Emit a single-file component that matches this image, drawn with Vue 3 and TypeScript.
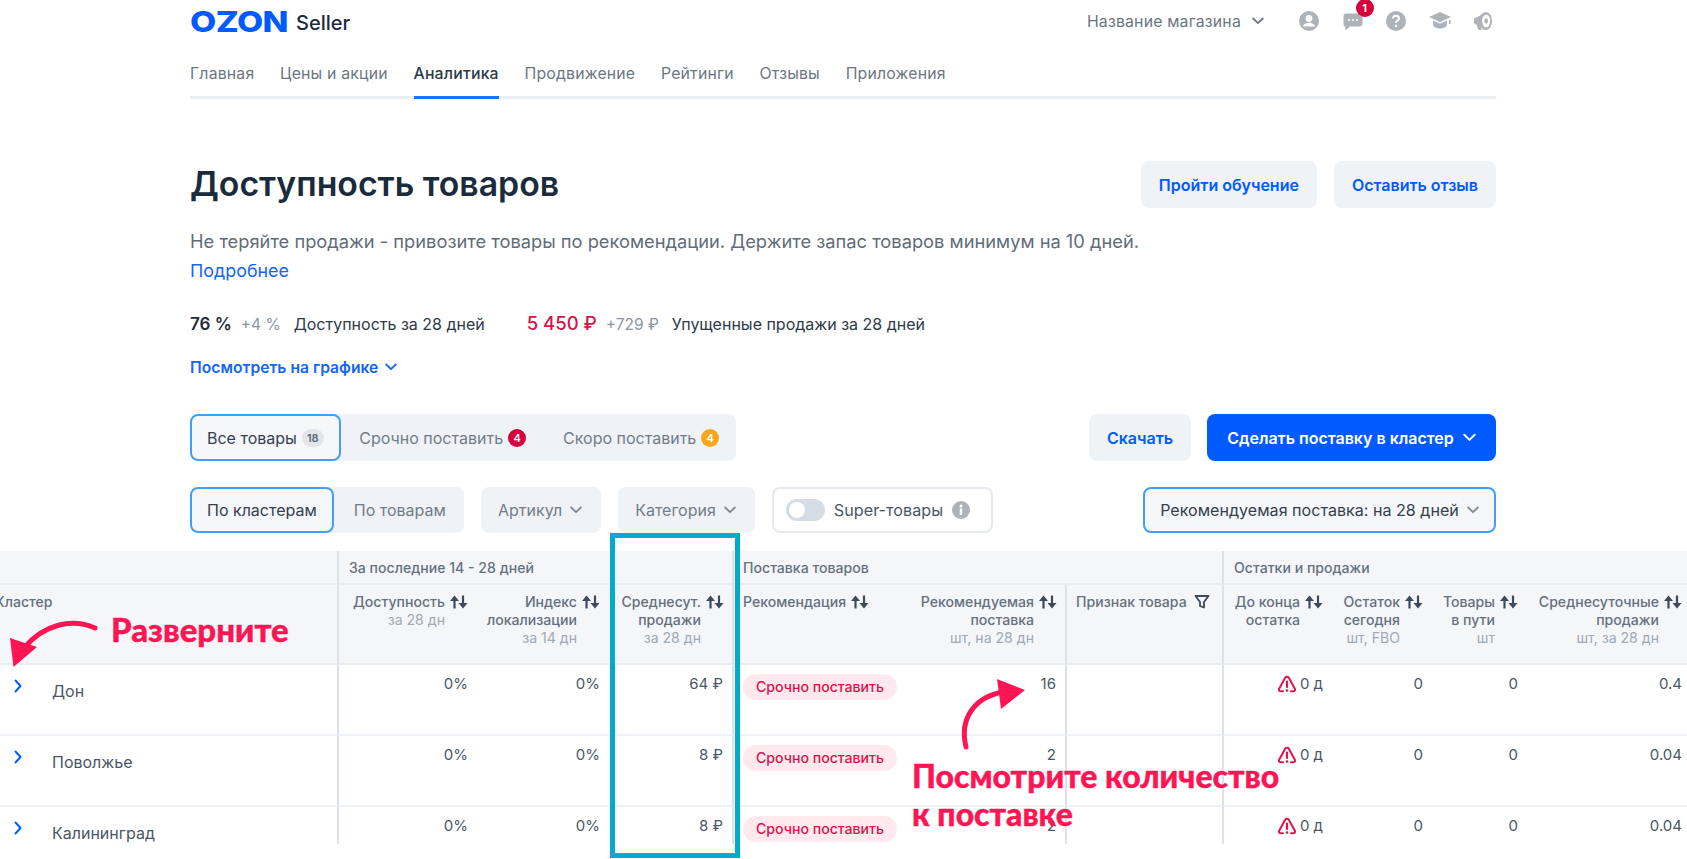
<script setup lang="ts">
interface HeadCell { lines: string[]; sub?: string; cls?: string; icon?: string }
interface Row { name: string; sales: string; rec: string; speed: string }

const nav: string[] = ['Главная', 'Цены и акции', 'Аналитика', 'Продвижение', 'Рейтинги', 'Отзывы', 'Приложения']

const heads: HeadCell[] = [
  { lines: ['Доступность'], sub: 'за 28 дн' },
  { lines: ['Индекс', 'локализации'], sub: 'за 14 дн' },
  { lines: ['Среднесут.', 'продажи'], sub: 'за 28 дн', cls: 'sep' },
  { lines: ['Рекомендация'], cls: 'left' },
  { lines: ['Рекомендуемая', 'поставка'], sub: 'шт, на 28 дн', cls: 'sep' },
  { lines: ['Признак товара'], cls: 'left sep', icon: 'filter' },
  { lines: ['До конца', 'остатка'] },
  { lines: ['Остаток', 'сегодня'], sub: 'шт, FBO' },
  { lines: ['Товары', 'в пути'], sub: 'шт' },
  { lines: ['Среднесуточные', 'продажи'], sub: 'шт, за 28 дн', cls: 'end' },
]

const rows: Row[] = [
  { name: 'Дон', sales: '64 ₽', rec: '16', speed: '0.4' },
  { name: 'Поволжье', sales: '8 ₽', rec: '2', speed: '0.04' },
  { name: 'Калининград', sales: '8 ₽', rec: '2', speed: '0.04' },
]
</script>

<template>
  <div class="page">
    <svg class="defs" width="0" height="0" aria-hidden="true">
      <symbol id="sort" viewBox="0 0 18 14">
        <path d="M4.500 13.500V4" fill="none" stroke="currentColor" stroke-width="2.200" />
        <path d="M4.500 .5 9 6H0z" fill="currentColor" />
        <path d="M13 .5V10" fill="none" stroke="currentColor" stroke-width="2.200" />
        <path d="M13 13.500 8.500 8h9z" fill="currentColor" />
      </symbol>
      <symbol id="chev" viewBox="0 0 12 8">
        <path d="M1.200 1.500 6 6.200l4.800-4.700" fill="none" stroke="currentColor" stroke-width="1.800" stroke-linecap="round" stroke-linejoin="round" />
      </symbol>
    </svg>

    <div class="container">
      <header class="top">
        <div class="brand">
          <span class="ozon-box"><span class="ozon">OZON</span></span>
          <span class="seller">Seller</span>
        </div>
        <div class="top-right">
          <span class="shop">Название магазина</span>
          <svg class="shop-chev"><use href="#chev" /></svg>
          <div class="top-icons">
            <svg class="ti" viewBox="0 0 20 20"><circle cx="10" cy="10" r="10" fill="#adb3b9" /><circle cx="10" cy="7.500" r="3.400" fill="#fff" /><path d="M3.800 15.500c1-2.600 3.400-3.800 6.200-3.800s5.200 1.200 6.200 3.800z" fill="#fff" /></svg>
            <div class="chat">
              <svg class="ti" viewBox="0 0 20 20"><path d="M3.500 2.500h13A3 3 0 0 1 19.500 5.500v7a3 3 0 0 1-3 3H7l-4.500 4v-4A2.500 2.500 0 0 1 .5 13V5.500a3 3 0 0 1 3-3z" fill="#adb3b9" /><circle cx="6" cy="9" r="1" fill="#fff" /><circle cx="10" cy="9" r="1" fill="#fff" /><circle cx="14" cy="9" r="1" fill="#fff" /></svg>
              <span class="bell">1</span>
            </div>
            <svg class="ti" viewBox="0 0 20 20"><circle cx="10" cy="10" r="10" fill="#adb3b9" /><path d="M7 7.600c0-1.700 1.300-2.800 3-2.800s3 1.100 3 2.600c0 2.200-3 2.300-3 4.300" fill="none" stroke="#fff" stroke-width="2" /><circle cx="10" cy="15" r="1.300" fill="#fff" /></svg>
            <svg class="ti cap" viewBox="0 0 22 18"><path d="M11 0 22 5l-11 5L0 5z" fill="#adb3b9" /><path d="M4 8.500v5c2 4 12 4 14 0v-5l-7 3.200z" fill="#adb3b9" /><rect x="20" y="8" width="1.600" height="4" fill="#adb3b9" /></svg>
            <svg class="ti" viewBox="0 0 20 22"><path d="M0 9.500 A2 2 0 0 1 2 7.500L11 3v16l-9-4.500A2 2 0 0 1 0 12.500z" fill="#adb3b9" /><path d="M3 15h4l1.500 6H5z" fill="#adb3b9" /><ellipse cx="13" cy="11" rx="7" ry="10" fill="#adb3b9" /><ellipse cx="13.500" cy="11" rx="4.500" ry="7" fill="#fff" /><ellipse cx="13.500" cy="11" rx="2" ry="3" fill="#adb3b9" /></svg>
          </div>
        </div>
      </header>

      <nav class="nav">
        <a v-for="item in nav" :key="item" :class="['nav-item', { active: item === 'Аналитика' }]">{{ item }}</a>
      </nav>

      <section class="title-row">
        <h1>Доступность товаров</h1>
        <div class="title-btns">
          <button class="btn light">Пройти обучение</button>
          <button class="btn light">Оставить отзыв</button>
        </div>
      </section>

      <p class="desc">Не теряйте продажи - привозите товары по рекомендации. Держите запас товаров минимум на 10 дней.</p>
      <a class="more">Подробнее</a>

      <div class="stats">
        <b class="st-main">76 %</b><span class="st-delta">+4 %</span><span class="st-label">Доступность за 28 дней</span>
        <b class="st-main red">5 450 ₽</b><span class="st-delta">+729 ₽</span><span class="st-label">Упущенные продажи за 28 дней</span>
      </div>

      <a class="chart-link">Посмотреть на графике <svg class="link-chev"><use href="#chev" /></svg></a>

      <div class="bar bar-1">
        <div class="seg">
          <span class="seg-item on">Все товары <i class="cnt grey">18</i></span>
          <span class="seg-item">Срочно поставить <i class="cnt redb">4</i></span>
          <span class="seg-item">Скоро поставить <i class="cnt orange">4</i></span>
        </div>
        <div class="bar-right">
          <button class="btn light dl">Скачать</button>
          <button class="btn primary">Сделать поставку в кластер <svg class="btn-chev"><use href="#chev" /></svg></button>
        </div>
      </div>

      <div class="bar bar-2">
        <div class="filters">
          <div class="seg small">
            <span class="seg-item on">По кластерам</span>
            <span class="seg-item">По товарам</span>
          </div>
          <span class="drop">Артикул <svg class="drop-chev"><use href="#chev" /></svg></span>
          <span class="drop">Категория <svg class="drop-chev"><use href="#chev" /></svg></span>
          <div class="super">
            <span class="toggle"><span class="knob"></span></span>
            <span>Super-товары</span>
            <svg class="info" viewBox="0 0 18 18"><circle cx="9" cy="9" r="9" fill="#adb3b9" /><rect x="7.800" y="7.500" width="2.400" height="6.500" fill="#fff" /><circle cx="9" cy="5" r="1.500" fill="#fff" /></svg>
          </div>
        </div>
        <span class="select">Рекомендуемая поставка: на 28 дней <svg class="drop-chev"><use href="#chev" /></svg></span>
      </div>
    </div>

    <div class="table">
      <div class="g g-first"></div>
      <div class="g g-a">За последние 14 - 28 дней</div>
      <div class="g g-b">Поставка товаров</div>
      <div class="g g-c">Остатки и продажи</div>

      <div class="h h-first"><span class="cluster">Кластер</span></div>
      <div v-for="head in heads" :key="head.lines[0]" :class="['h', head.cls]">
        <div class="h-text">
          <div v-for="line in head.lines" :key="line">{{ line }}</div>
          <div v-if="head.sub" class="sub">{{ head.sub }}</div>
        </div>
        <svg v-if="head.icon === 'filter'" class="filter" viewBox="0 0 16 16"><path d="M1.500 2h13L10 8v5.500L6 12V8z" fill="none" stroke="currentColor" stroke-width="1.800" stroke-linejoin="round" /></svg>
        <svg v-else class="sort"><use href="#sort" /></svg>
      </div>

      <template v-for="row in rows" :key="row.name">
        <div class="c c-first sep">
          <svg class="row-chev" viewBox="0 0 8 14"><path d="M1.500 1.500 6.500 7l-5 5.500" fill="none" stroke="#005bff" stroke-width="1.900" stroke-linecap="round" stroke-linejoin="round" /></svg>
          <span class="row-name">{{ row.name }}</span>
        </div>
        <div class="c">0%</div>
        <div class="c">0%</div>
        <div class="c sep">{{ row.sales }}</div>
        <div class="c left"><span class="pill">Срочно поставить</span></div>
        <div class="c sep">{{ row.rec }}</div>
        <div class="c sep"></div>
        <div class="c">
          <svg class="warn" viewBox="0 0 18 18"><path d="M5 16.300H3c-1.700 0-2.500-1.400-1.700-2.800L7.300 2.600c.8-1.300 2.600-1.300 3.400 0l6 10.900c.8 1.400 0 2.800-1.700 2.800h-2" fill="none" stroke="#e0134b" stroke-width="2" stroke-linecap="round" /><path d="M9 6.500v5.500" stroke="#e0134b" stroke-width="2.200" stroke-linecap="round" /><circle cx="9" cy="15.500" r="1.300" fill="#e0134b" /></svg>
          <span>0 д</span>
        </div>
        <div class="c">0</div>
        <div class="c">0</div>
        <div class="c end">{{ row.speed }}</div>
      </template>
    </div>

    <div class="frame"></div>
    <span class="note note-a">Разверните</span>
    <span class="note note-b">Посмотрите количество<br />к поставке</span>
    <svg class="arrows" width="1687" height="859" viewBox="0 0 1687 859">
      <path d="M95 628C72 618 44 624 24 648" fill="none" stroke="#ff1454" stroke-width="5" stroke-linecap="round" />
      <path d="M13.500 667 10 638 37 647z" fill="#ff1454" />
      <path d="M966 747C959 718 975 697 1003 692" fill="none" stroke="#ff1454" stroke-width="5" stroke-linecap="round" />
      <path d="M997 679 1025 690 1001 709z" fill="#ff1454" />
    </svg>
  </div>
</template>

<style>
html, body { margin: 0; background: #fff; overflow: hidden; }
</style>

<style scoped>
.page {
  position: relative;
  width: 1687px;
  height: 859px;
  overflow: hidden;
  background: #fff;
  color: #1f2d3d;
  font-family: Inter, "Liberation Sans", sans-serif;
  font-size: 14px;
}
.defs { position: absolute; }
.container { width: 1306px; margin-left: 190px; }
a { display: block; }

.top { display: flex; justify-content: space-between; align-items: center; height: 42px; }
.brand { display: flex; align-items: center; gap: 8px; }
.ozon-box { display: block; width: 98px; height: 30px; margin-top: 1px; }
.ozon {
  display: inline-block;
  color: #005bff;
  font-size: 29px;
  line-height: 30px;
  font-weight: 800;
  letter-spacing: -0.5px;
  transform: scaleX(1.17);
  transform-origin: left center;
}
.seller { margin-top: 4px; font-size: 20px; font-weight: 500; color: #1a2b40; }
.top-right { display: flex; align-items: center; }
.shop { font-size: 15.800px; color: #6b7683; letter-spacing: 0.2px; }
.shop-chev { width: 12px; height: 8px; margin-left: 11px; color: #6b7683; }
.top-icons { display: flex; align-items: center; gap: 23.500px; margin-left: 35px; margin-right: 3px; }
.ti { width: 20px; height: 20px; display: block; }
.ti.cap { width: 22px; height: 18px; margin: 0 -1px; }
.chat { position: relative; }
.bell {
  position: absolute;
  top: -12px;
  left: 13px;
  width: 18px;
  height: 18px;
  border-radius: 50%;
  background: #d6003c;
  color: #fff;
  font-size: 11px;
  font-weight: 700;
  line-height: 18px;
  text-align: center;
}

.nav { display: flex; gap: 25.700px; height: 54px; border-bottom: 3px solid #eaedf2; box-sizing: content-box; }
.nav-item { position: relative; padding-top: 22px; font-size: 15.800px; line-height: 20px; color: #6b7683; letter-spacing: 0.2px; }
.nav-item.active { color: #2b3a4a; font-weight: 500; }
.nav-item.active::after {
  content: "";
  position: absolute;
  left: 0;
  right: 0;
  bottom: -3px;
  height: 3px;
  background: #1f6fee;
}

.title-row { display: flex; justify-content: space-between; align-items: center; margin-top: 62px; height: 47px; }
h1 { margin: 0 0 2px; font-size: 33.800px; font-weight: 600; color: #1a2b3c; }
.title-btns { display: flex; gap: 17px; }
.btn {
  height: 47px;
  padding: 0 18px;
  border: 0;
  border-radius: 8px;
  font: 600 16px Inter, "Liberation Sans", sans-serif;
  display: flex;
  align-items: center;
  white-space: nowrap;
}
.btn.light { background: #eff2f6; color: #005bff; }
.btn.primary { width: 289px; justify-content: center; gap: 9px; background: #005bff; color: #fff; padding: 0; }
.btn-chev { width: 13px; height: 9px; color: #fff; }

.desc { margin: 21px 0 0; font-size: 18.300px; line-height: 24px; color: #5f6c7a; }
.more { margin-top: 6px; font-size: 17.900px; line-height: 24px; color: #1466f5; }

.stats { display: flex; align-items: baseline; margin-top: 29px; height: 24px; }
.st-main { font-size: 17px; font-weight: 600; color: #1f2d3d; }
.st-main.red { margin-left: 42px; font-size: 18.500px; font-weight: 500; color: #d8134a; }
.st-delta { margin-left: 9px; font-size: 15.500px; color: #8b95a1; }
.st-label { margin-left: 13px; font-size: 16px; color: #2d3a48; }

.chart-link { display: flex; align-items: center; gap: 7px; margin-top: 19px; height: 24px; font-size: 15.700px; font-weight: 600; color: #1466f5; }
.link-chev { width: 12px; height: 8px; color: #1466f5; }

.bar { display: flex; justify-content: space-between; align-items: flex-start; }
.bar-1 { margin-top: 35px; }
.bar-2 { margin-top: 26px; }
.bar-right { display: flex; gap: 16px; }
.dl { width: 102px; justify-content: center; padding: 0; }

.seg { display: flex; height: 47px; background: #eff2f6; border-radius: 8px; width: 546px; box-sizing: border-box; }
.seg.small { width: 274px; height: 46px; }
.seg-item { display: flex; align-items: center; gap: 5px; padding: 0 18.500px; font-size: 16px; color: #727d89; white-space: nowrap; box-sizing: border-box; }
.seg-item.on {
  width: 152px;
  padding: 0 15px;
  background: #f5f7fb;
  color: #34404d;
  border: 2px solid #41a0f5;
  border-radius: 8px;
}
.seg.small .seg-item.on { width: 144px; }
.seg.small .seg-item:not(.on) { padding: 0 20px; }
.cnt {
  display: inline-flex;
  align-items: center;
  justify-content: center;
  min-width: 18px;
  height: 18px;
  border-radius: 9px;
  font-size: 11px;
  font-style: normal;
  font-weight: 600;
  color: #fff;
}
.cnt.grey { min-width: 22px; background: #e2e6ec; color: #5d6875; }
.cnt.redb { background: #d6003c; }
.cnt.orange { background: #f5a81c; }

.filters { display: flex; align-items: flex-start; gap: 17px; }
.drop {
  display: flex;
  align-items: center;
  gap: 8px;
  height: 46px;
  padding: 0 19px 0 17px;
  background: #eff2f6;
  border-radius: 8px;
  font-size: 16px;
  color: #727d89;
}
.drop-chev { width: 12px; height: 8px; color: #7f8994; }
.super {
  display: flex;
  align-items: center;
  width: 221px;
  height: 46px;
  padding-left: 12px;
  box-sizing: border-box;
  border: 2px solid #e6eaf0;
  border-radius: 8px;
  font-size: 16.200px;
  color: #4a5663;
  gap: 9px;
}
.toggle { display: block; width: 39px; height: 22px; border-radius: 11px; background: #d5dce5; position: relative; }
.knob { position: absolute; left: 3px; top: 3px; width: 16px; height: 16px; border-radius: 50%; background: #fff; }
.info { width: 18px; height: 18px; }
.select {
  display: flex;
  align-items: center;
  justify-content: center;
  gap: 8px;
  width: 353px;
  height: 46px;
  box-sizing: border-box;
  background: #f5f7fb;
  border: 2px solid #41a0f5;
  border-radius: 8px;
  font-size: 16.100px;
  color: #34404d;
  white-space: nowrap;
}

.table {
  display: grid;
  grid-template-columns: 339px 145px 132px 118px 176px 157px 157px 115px 100px 95px 153px;
  grid-template-rows: 34px 80px 71px 71px 71px;
  height: 293px;
  margin-top: 18px;
  overflow: hidden;
  font-size: 14.100px;
  line-height: 18px;
  color: #4a5766;
}
.g {
  background: #f4f6fa;
  border-bottom: 2px solid #e9edf2;
  box-sizing: border-box;
  padding-top: 8px;
  font-weight: 500;
  color: #65717e;
}
.g-first { border-right: 2px solid #dbe2ea; }
.g-a { grid-column: span 3; padding-left: 10px; border-right: 2px solid #dbe2ea; }
.g-b { grid-column: span 3; padding-left: 9px; border-right: 2px solid #dbe2ea; }
.g-c { grid-column: span 4; padding-left: 10px; }

.h {
  display: flex;
  justify-content: flex-end;
  align-items: flex-start;
  gap: 5px;
  padding: 8px 16px 0 0;
  background: #f4f6fa;
  border-bottom: 2px solid #e9edf2;
  box-sizing: border-box;
  font-weight: 500;
  color: #65717e;
  text-align: right;
  white-space: nowrap;
}
.h-first { justify-content: flex-start; border-right: 2px solid #dbe2ea; padding-right: 0; }
.cluster { margin-left: -5px; }
.sub { font-weight: 400; color: #a0a9b4; }
.sep { border-right: 2px solid #dbe2ea; }
.h.sep { padding-right: 8px; }
.h.end { padding-right: 5px; }
.h.left { justify-content: flex-start; padding-left: 9px; padding-right: 0; }
.h.left.sep { padding-left: 9px; }
.sort { width: 18px; height: 14px; margin-top: 2px; color: #3c4a5c; }
.filter { width: 16px; height: 16px; margin: 1px 0 0 2px; color: #3c4a5c; }

.c {
  display: flex;
  justify-content: flex-end;
  align-items: flex-start;
  padding: 10px 16px 0 0;
  border-bottom: 2px solid #eef1f5;
  box-sizing: border-box;
  font-size: 15px;
  white-space: nowrap;
}
.c.end { padding-right: 5px; }
.c.sep { padding-right: 9px; }
.c.left { justify-content: flex-start; padding-left: 9px; padding-right: 0; }
.c-first { justify-content: flex-start; padding: 0; position: relative; }
.row-chev { position: absolute; left: 14px; top: 14px; width: 8px; height: 14px; }
.row-name { margin: 17px 0 0 52px; font-size: 16px; }
.pill {
  height: 26px;
  width: 154px;
  margin-top: -1px;
  border-radius: 13px;
  background: #ffe9ef;
  color: #d8134a;
  font-size: 14.100px;
  font-weight: 500;
  line-height: 26px;
  text-align: center;
}
.warn { width: 18px; height: 18px; margin-right: 4px; }

.frame {
  position: absolute;
  left: 610px;
  top: 533px;
  width: 130px;
  height: 325px;
  box-sizing: border-box;
  border: 5px solid #00acc9;
}
.arrows { position: absolute; left: 0; top: 0; pointer-events: none; }
.note {
  position: absolute;
  color: #ff1454;
  font-family: Lato, Inter, sans-serif;
  font-weight: 900;
  white-space: nowrap;
  -webkit-text-stroke: 0.4px #ff1454;
}
.note-a { left: 111px; top: 610px; font-size: 33px; line-height: 38px; }
.note-b { left: 912px; top: 757px; font-size: 32px; line-height: 38px; }
</style>
